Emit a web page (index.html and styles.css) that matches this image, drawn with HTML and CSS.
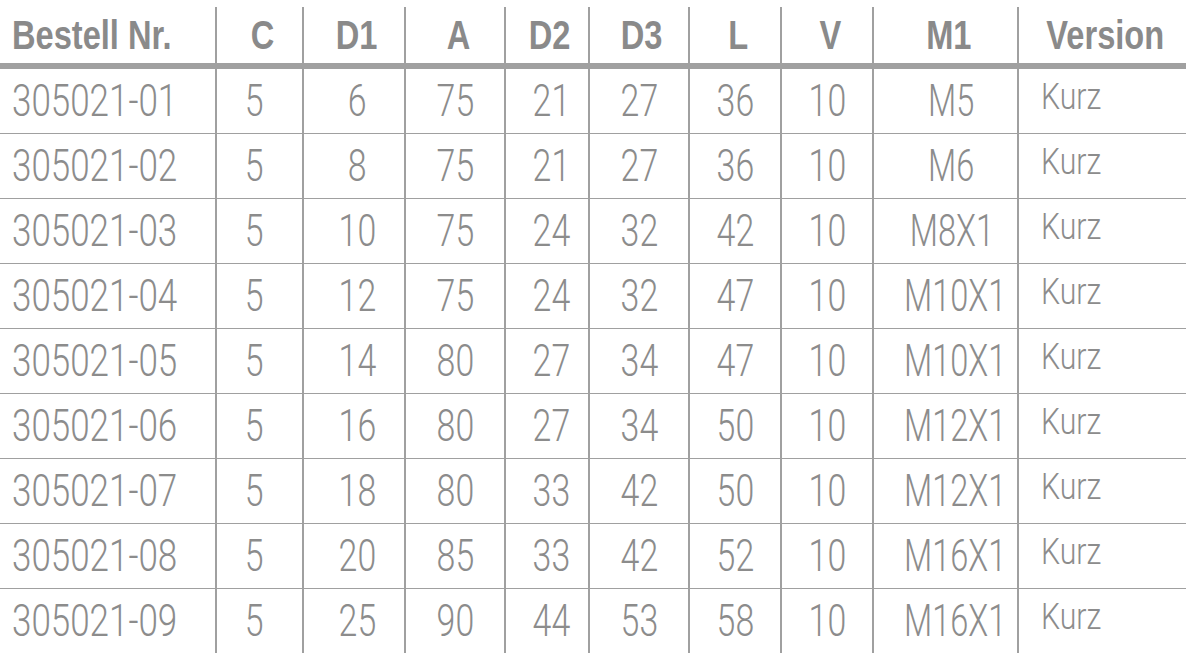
FILE: index.html
```html
<!DOCTYPE html>
<html lang="de">
<head>
<meta charset="utf-8">
<title>Bestelltabelle</title>
<link rel="stylesheet" href="styles.css">
</head>
<body>
<table class="spec">
  <colgroup>
    <col class="c-nr"><col class="c-c"><col class="c-d1"><col class="c-a"><col class="c-d2"><col class="c-d3"><col class="c-l"><col class="c-v"><col class="c-m1"><col class="c-ver">
  </colgroup>
  <thead>
    <tr>
      <th class="first"><span class="t">Bestell Nr.</span></th><th><span class="t">C</span></th><th><span class="t">D1</span></th><th><span class="t">A</span></th><th><span class="t">D2</span></th><th><span class="t">D3</span></th><th><span class="t">L</span></th><th><span class="t">V</span></th><th><span class="t">M1</span></th><th><span class="t">Version</span></th>
    </tr>
  </thead>
  <tbody>
    <tr><td class="first"><span class="t">305021-01</span></td><td class="cc"><span class="t">5</span></td><td class="cd1"><span class="t">6</span></td><td><span class="t">75</span></td><td class="cd2"><span class="t">21</span></td><td><span class="t">27</span></td><td><span class="t">36</span></td><td><span class="t">10</span></td><td class="cm1"><span class="t">M5</span></td><td class="ver"><span class="t">Kurz</span></td></tr>
    <tr><td class="first"><span class="t">305021-02</span></td><td class="cc"><span class="t">5</span></td><td class="cd1"><span class="t">8</span></td><td><span class="t">75</span></td><td class="cd2"><span class="t">21</span></td><td><span class="t">27</span></td><td><span class="t">36</span></td><td><span class="t">10</span></td><td class="cm1"><span class="t">M6</span></td><td class="ver"><span class="t">Kurz</span></td></tr>
    <tr><td class="first"><span class="t">305021-03</span></td><td class="cc"><span class="t">5</span></td><td class="cd1"><span class="t">10</span></td><td><span class="t">75</span></td><td class="cd2"><span class="t">24</span></td><td><span class="t">32</span></td><td><span class="t">42</span></td><td><span class="t">10</span></td><td class="cm1"><span class="t">M8X1</span></td><td class="ver"><span class="t">Kurz</span></td></tr>
    <tr><td class="first"><span class="t">305021-04</span></td><td class="cc"><span class="t">5</span></td><td class="cd1"><span class="t">12</span></td><td><span class="t">75</span></td><td class="cd2"><span class="t">24</span></td><td><span class="t">32</span></td><td><span class="t">47</span></td><td><span class="t">10</span></td><td class="cm1"><span class="t">M10X1</span></td><td class="ver"><span class="t">Kurz</span></td></tr>
    <tr><td class="first"><span class="t">305021-05</span></td><td class="cc"><span class="t">5</span></td><td class="cd1"><span class="t">14</span></td><td><span class="t">80</span></td><td class="cd2"><span class="t">27</span></td><td><span class="t">34</span></td><td><span class="t">47</span></td><td><span class="t">10</span></td><td class="cm1"><span class="t">M10X1</span></td><td class="ver"><span class="t">Kurz</span></td></tr>
    <tr><td class="first"><span class="t">305021-06</span></td><td class="cc"><span class="t">5</span></td><td class="cd1"><span class="t">16</span></td><td><span class="t">80</span></td><td class="cd2"><span class="t">27</span></td><td><span class="t">34</span></td><td><span class="t">50</span></td><td><span class="t">10</span></td><td class="cm1"><span class="t">M12X1</span></td><td class="ver"><span class="t">Kurz</span></td></tr>
    <tr><td class="first"><span class="t">305021-07</span></td><td class="cc"><span class="t">5</span></td><td class="cd1"><span class="t">18</span></td><td><span class="t">80</span></td><td class="cd2"><span class="t">33</span></td><td><span class="t">42</span></td><td><span class="t">50</span></td><td><span class="t">10</span></td><td class="cm1"><span class="t">M12X1</span></td><td class="ver"><span class="t">Kurz</span></td></tr>
    <tr><td class="first"><span class="t">305021-08</span></td><td class="cc"><span class="t">5</span></td><td class="cd1"><span class="t">20</span></td><td><span class="t">85</span></td><td class="cd2"><span class="t">33</span></td><td><span class="t">42</span></td><td><span class="t">52</span></td><td><span class="t">10</span></td><td class="cm1"><span class="t">M16X1</span></td><td class="ver"><span class="t">Kurz</span></td></tr>
    <tr><td class="first"><span class="t">305021-09</span></td><td class="cc"><span class="t">5</span></td><td class="cd1"><span class="t">25</span></td><td><span class="t">90</span></td><td class="cd2"><span class="t">44</span></td><td><span class="t">53</span></td><td><span class="t">58</span></td><td><span class="t">10</span></td><td class="cm1"><span class="t">M16X1</span></td><td class="ver"><span class="t">Kurz</span></td></tr>
  </tbody>
</table>
</body>
</html>
```
FILE: styles.css
```css
html, body {
  margin: 0;
  padding: 0;
  background: #ffffff;
}

body {
  padding-top: 7px;
}

.spec {
  border-collapse: collapse;
  table-layout: fixed;
  width: 1186px;
  font-family: "Roboto", "Liberation Sans", Arial, sans-serif;
  color: #8c8c8c;
}

.c-nr { width: 216px; }
.c-c { width: 87px; }
.c-d1 { width: 102px; }
.c-a { width: 100px; }
.c-d2 { width: 84px; }
.c-d3 { width: 100px; }
.c-l { width: 92px; }
.c-v { width: 92px; }
.c-m1 { width: 145px; }
.c-ver { width: 168px; }

.spec th,
.spec td {
  padding: 0;
  text-align: center;
  border-right: 2px solid #a0a0a0;
  white-space: nowrap;
}

.spec th:last-child,
.spec td:last-child {
  border-right: none;
}

.t {
  display: inline-block;
  transform-origin: center center;
}

.spec th {
  height: 56px;
  font-family: "Liberation Sans", Arial, sans-serif;
  font-size: 40px;
  font-weight: bold;
  line-height: 1;
  vertical-align: middle;
  padding-left: 6px;
  border-bottom: 6px solid #a0a0a0;
  color: #8a8a8a;
}

.spec th .t {
  transform: scaleX(0.815);
}

.spec td {
  height: 64px;
  font-size: 44px;
  font-weight: 300;
  line-height: 1;
  vertical-align: middle;
  border-bottom: 1px solid #a0a0a0;
}

.spec td .t {
  transform: scaleX(0.77);
}

.spec tbody tr:last-child td {
  border-bottom: none;
}

.spec td.cc {
  padding-right: 10px;
}

.spec td.cd1 {
  padding-left: 6px;
}

.spec td.cd2 {
  padding-left: 8px;
}

.spec td.cm1 {
  padding-left: 12px;
}

.spec td.cm1 .t {
  transform: scaleX(0.74);
}

.spec th.first,
.spec td.first {
  text-align: left;
  padding-left: 12px;
}

.spec th.first .t,
.spec td.first .t {
  transform-origin: left center;
}

.spec td.first .t {
  transform: scaleX(0.795);
}

.spec td.ver {
  text-align: left;
  padding-left: 22px;
  font-size: 36px;
  height: 56px;
  padding-bottom: 8px;
}

.spec td.ver .t {
  transform-origin: left center;
  transform: scaleX(0.84);
}
```
